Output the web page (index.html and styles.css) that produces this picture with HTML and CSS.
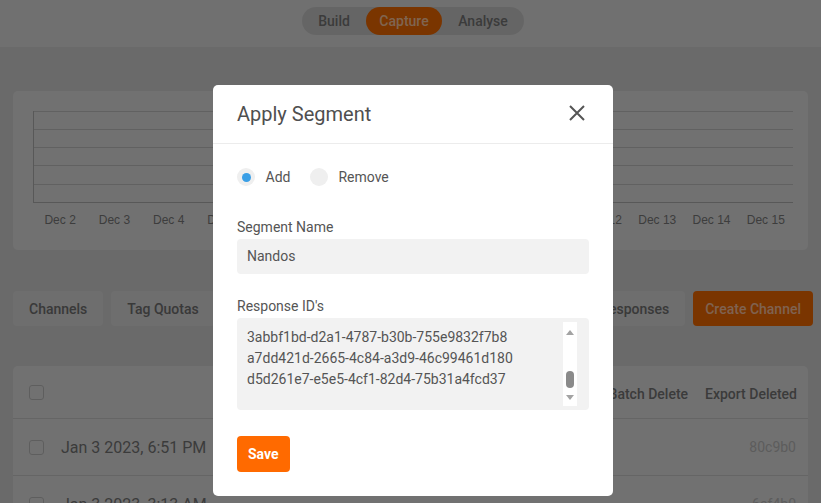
FILE: index.html
```html
<!DOCTYPE html>
<html lang="en">
<head>
<meta charset="utf-8">
<title>Apply Segment</title>
<link rel="stylesheet" href="styles.css">
</head>
<body>
<div class="page">
  <header class="topbar">
    <nav class="seg">
      <span class="seg-btn">Build</span>
      <span class="seg-btn active">Capture</span>
      <span class="seg-btn">Analyse</span>
    </nav>
  </header>
  <main class="content">
    <section class="card chart-card">
      <svg class="grid" width="760" height="92" viewBox="0 0 760 92">
        <g stroke="#c2c2c2" stroke-width="1">
          <line x1="0" y1="0.5" x2="760" y2="0.5"/>
          <line x1="0" y1="18.5" x2="760" y2="18.5"/>
          <line x1="0" y1="36.5" x2="760" y2="36.5"/>
          <line x1="0" y1="54.5" x2="760" y2="54.5"/>
          <line x1="0" y1="73.5" x2="760" y2="73.5"/>
        </g>
        <g stroke="#b0b0b0" stroke-width="1">
          <line x1="0" y1="91.5" x2="760" y2="91.5"/>
          <line x1="0.5" y1="0" x2="0.5" y2="92"/>
        </g>
      </svg>
      <div class="xlabels">
        <span>Dec 2</span><span>Dec 3</span><span>Dec 4</span><span>Dec 5</span><span>Dec 6</span><span>Dec 7</span><span>Dec 8</span><span>Dec 9</span><span>Dec 10</span><span>Dec 11</span><span>Dec 12</span><span>Dec 13</span><span>Dec 14</span><span>Dec 15</span>
      </div>
    </section>
    <div class="toolbar">
      <div class="group">
        <button class="btn">Channels</button>
        <button class="btn">Tag Quotas</button>
      </div>
      <div class="group">
        <button class="btn">Export Responses</button>
        <button class="btn primary">Create Channel</button>
      </div>
    </div>
    <section class="card table-card">
      <div class="row head">
        <span class="cb"></span>
        <span class="fill"></span>
        <span class="hbtn">Batch Delete</span>
        <span class="hbtn">Export Deleted</span>
      </div>
      <div class="row">
        <span class="cb"></span>
        <span class="date">Jan 3 2023, 6:51 PM</span>
        <span class="rid">80c9b0</span>
      </div>
      <div class="row">
        <span class="cb"></span>
        <span class="date">Jan 3 2023, 3:13 AM</span>
        <span class="rid">6af4b0</span>
      </div>
    </section>
  </main>
</div>

<div class="overlay">
  <div class="modal">
    <div class="modal-head">
      <h2 class="title">Apply Segment</h2>
      <svg class="close" width="16" height="16" viewBox="0 0 16 16"><path d="M1 1L15 15M15 1L1 15" stroke="#555" stroke-width="2" fill="none"/></svg>
    </div>
    <div class="modal-body">
      <div class="radios">
        <label class="radio"><span class="dot on"></span>Add</label>
        <label class="radio"><span class="dot"></span>Remove</label>
      </div>
      <div class="field-label first">Segment Name</div>
      <div class="input">Nandos</div>
      <div class="field-label">Response ID's</div>
      <div class="ta">
        <div class="ta-text">
          <div>3abbf1bd-d2a1-4787-b30b-755e9832f7b8</div>
          <div>a7dd421d-2665-4c84-a3d9-46c99461d180</div>
          <div>d5d261e7-e5e5-4cf1-82d4-75b31a4fcd37</div>
        </div>
        <div class="sb">
          <span class="arrow up"></span>
          <span class="thumb"></span>
          <span class="arrow down"></span>
        </div>
      </div>
      <button class="save">Save</button>
    </div>
  </div>
</div>
</body>
</html>
```
FILE: styles.css
```css
html, body {
  margin: 0;
  padding: 0;
}
body {
  width: 821px;
  height: 503px;
  overflow: hidden;
  font-family: Roboto, "Liberation Sans", Arial, sans-serif;
  background: #d5d5d5;
}

/* ---------- top bar ---------- */
.topbar {
  height: 47px;
  box-sizing: border-box;
  padding-top: 7px;
  background: #e1e1e1;
  display: flex;
  justify-content: center;
  align-items: flex-start;
}
.seg {
  display: flex;
  height: 28px;
  margin-left: 5px;
  background: #cbcbcb;
  border-radius: 14px;
}
.seg-btn {
  padding: 0 16px;
  line-height: 28px;
  font-size: 14px;
  font-weight: 500;
  color: #777;
  border-radius: 14px;
}
.seg-btn.active {
  padding: 0 13.5px;
  background: #f46a00;
  color: #ffc9a0;
}

/* ---------- content ---------- */
.content {
  padding: 44px 13px 0;
}
.card {
  background: #e3e3e3;
  border-radius: 5px;
}
.chart-card {
  height: 159px;
  box-sizing: border-box;
  padding: 20px 15px 0 20px;
}
.grid {
  display: block;
}
.xlabels {
  display: flex;
  margin-top: 10px;
  font-family: "Liberation Sans", Arial, sans-serif;
  font-size: 12px;
  line-height: 14px;
  color: #7a7a7a;
}
.xlabels span {
  flex: 1;
  text-align: center;
}

.toolbar {
  display: flex;
  justify-content: space-between;
  margin: 41px -5px 0 0;
}
.group {
  display: flex;
  gap: 8px;
}
.btn {
  height: 35px;
  border: 0;
  border-radius: 4px;
  padding: 0 16px;
  background: #dcdcdc;
  font-family: Roboto, "Liberation Sans", sans-serif;
  font-size: 14px;
  font-weight: 500;
  color: #737373;
}
.btn.primary {
  padding: 0 12px;
  background: #f46a00;
  color: #ffc4a0;
}

.table-card {
  margin-top: 40px;
  height: 220px;
}
.row {
  display: flex;
  align-items: center;
  height: 56px;
  padding: 0 12px 0 16px;
  border-bottom: 1px solid #cacaca;
}
.row.head {
  height: 52px;
}
.cb {
  width: 15px;
  height: 15px;
  box-sizing: border-box;
  border: 1px solid #bdbdbd;
  border-radius: 3px;
}
.fill {
  flex: 1;
}
.hbtn {
  font-size: 14px;
  font-weight: 500;
  color: #777;
  margin-left: 17px;
  margin-top: 3px;
}
.hbtn:last-child {
  margin-right: -1px;
}
.date {
  flex: 1;
  margin-left: 17px;
  font-size: 16px;
  color: #777;
}
.rid {
  font-size: 14px;
  color: #b9b9b9;
}

/* ---------- modal ---------- */
.overlay {
  position: fixed;
  inset: 0;
  background: rgba(0, 0, 0, 0.5);
  padding: 85px 0 0 213px;
  box-sizing: border-box;
}
.modal {
  width: 400px;
  background: #fff;
  border-radius: 5px;
  color: #555;
}
.modal-head {
  height: 58px;
  display: flex;
  align-items: center;
  justify-content: space-between;
  padding: 0 28px 0 24px;
  border-bottom: 1px solid #ececec;
}
.title {
  margin: 0;
  font-size: 20px;
  font-weight: 400;
  color: #4f4f4f;
}
.close {
  display: block;
  margin-top: -2px;
}
.modal-body {
  padding: 24px 24px 24px;
}
.radios {
  display: flex;
  align-items: center;
  height: 18px;
}
.radio {
  display: flex;
  align-items: center;
  gap: 10.5px;
  margin-right: 19.5px;
  font-size: 14px;
  color: #555;
}
.dot {
  width: 18px;
  height: 18px;
  border-radius: 50%;
  background: #efefef;
  display: flex;
  align-items: center;
  justify-content: center;
}
.dot.on::after {
  content: "";
  width: 9px;
  height: 9px;
  border-radius: 50%;
  background: #3a9fe6;
}
.field-label {
  margin-top: 23.5px;
  margin-bottom: 4px;
  font-size: 14px;
  color: #555;
}
.field-label.first {
  margin-top: 33px;
}
.input {
  height: 35px;
  line-height: 35px;
  padding: 0 10px;
  background: #f2f2f2;
  border-radius: 4px;
  font-size: 14px;
  color: #555;
}
.ta {
  height: 92px;
  box-sizing: border-box;
  display: flex;
  padding: 4px 12px 4px 10px;
  background: #f2f2f2;
  border-radius: 4px;
}
.ta-text {
  flex: 1;
  padding-top: 5px;
  font-size: 14px;
  line-height: 21px;
  color: #555;
}
.sb {
  width: 14px;
  background: #fff;
  display: flex;
  flex-direction: column;
  align-items: center;
  padding: 8px 0 6px;
  box-sizing: border-box;
}
.arrow {
  width: 0;
  height: 0;
  border-left: 4px solid transparent;
  border-right: 4px solid transparent;
}
.arrow.up {
  border-bottom: 5px solid #a3a3a3;
}
.arrow.down {
  margin-top: auto;
  border-top: 5px solid #a3a3a3;
}
.thumb {
  width: 8px;
  height: 17px;
  margin-top: 36px;
  border-radius: 4px;
  background: #8a8a8a;
}
.save {
  display: block;
  margin-top: 26px;
  height: 36px;
  padding: 0 11px;
  border: 0;
  border-radius: 4px;
  background: #ff6a00;
  color: #fff;
  font-family: Roboto, "Liberation Sans", sans-serif;
  font-size: 14px;
  font-weight: 700;
}
```
